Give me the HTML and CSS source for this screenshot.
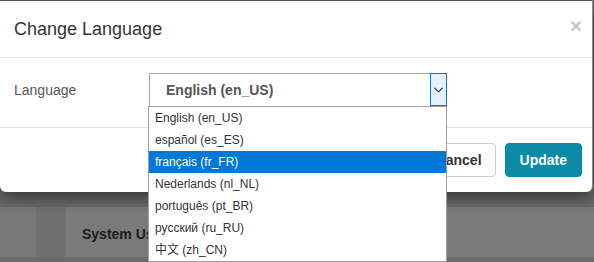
FILE: index.html
```html
<!DOCTYPE html>
<html lang="en">
<head>
<meta charset="utf-8">
<title>Change Language</title>
<link rel="stylesheet" href="styles.css">
</head>
<body>
<div class="page">
  <div class="page-top"></div>
  <div class="page-row">
    <div class="side-panel"></div>
    <div class="main-panel">
      <div class="panel-title">System Users</div>
    </div>
  </div>
</div>

<div class="modal">
  <div class="modal-header">
    <h4 class="modal-title">Change Language</h4>
    <span class="close">&times;</span>
  </div>
  <div class="modal-body">
    <label class="field-label">Language</label>
    <div class="select">
      <span class="select-value">English (en_US)</span>
      <span class="select-arrow">
        <svg width="9" height="6" viewBox="0 0 9 6"><polyline points="0.5,0.8 4.5,4.8 8.5,0.8" fill="none" stroke="#222" stroke-width="1.1"/></svg>
      </span>
      <ul class="dropdown">
        <li>English (en_US)</li>
        <li>español (es_ES)</li>
        <li class="active">français (fr_FR)</li>
        <li>Nederlands (nl_NL)</li>
        <li>português (pt_BR)</li>
        <li>русский (ru_RU)</li>
        <li>中文 (zh_CN)</li>
      </ul>
    </div>
  </div>
  <div class="modal-footer">
    <button class="btn btn-default">Cancel</button>
    <button class="btn btn-primary">Update</button>
  </div>
</div>
</body>
</html>
```

FILE: styles.css
```css
* { box-sizing: border-box; }

html, body {
  margin: 0;
  padding: 0;
}

body {
  width: 594px;
  height: 262px;
  overflow: hidden;
  background: #6b6b6b;
  font-family: "Liberation Sans", Arial, sans-serif;
  position: relative;
}

/* background page (dimmed by backdrop) */
.page-top {
  height: 207px;
  background: #686868;
}

.page-row {
  display: flex;
  gap: 30px;
  height: 50px;
  background: #707070;
}

.side-panel {
  width: 36px;
  background: #787878;
}

.main-panel {
  flex: 1;
  background: #7a7a7a;
  padding: 19px 16px 0 16px;
}

.panel-title {
  font-weight: bold;
  font-size: 14px;
  color: #1c1c1c;
}

/* modal */
.modal {
  position: absolute;
  top: 0;
  left: 0;
  width: 593px;
  background: #fff;
  border-top: 1px solid #5a5a5a;
  border-right: 1px solid #8a8a8a;
  border-radius: 0 0 6px 6px;
  box-shadow: 0 5px 15px rgba(0, 0, 0, 0.5);
}

.modal-header {
  display: flex;
  justify-content: space-between;
  align-items: flex-start;
  height: 57px;
  padding: 17px 10px 0 14px;
  border-bottom: 1px solid #e5e5e5;
}

.modal-title {
  margin: 0;
  font-size: 18px;
  font-weight: normal;
  line-height: 22px;
  color: #333;
}

.close {
  font-size: 21px;
  font-weight: bold;
  line-height: 21px;
  color: #c6c6c6;
  margin-top: -3px;
}

.modal-body {
  display: flex;
  align-items: flex-start;
  padding: 15px 14px 20px 14px;
}

.field-label {
  width: 135px;
  font-size: 14px;
  line-height: 34px;
  color: #555;
}

.select {
  position: relative;
  display: flex;
  align-items: stretch;
  width: 298px;
  height: 34px;
  border: 1px solid #a6a6a6;
  border-right: none;
}

.select-value {
  flex: 1;
  padding-left: 16px;
  font-size: 14px;
  font-weight: bold;
  line-height: 32px;
  color: #555;
}

.select-arrow {
  width: 17px;
  margin-top: -1px;
  height: 33px;
  border: 1px solid #0078d7;
  background: #e5f1fb;
  display: flex;
  align-items: center;
  justify-content: center;
  padding-top: 1px;
}

.dropdown {
  position: absolute;
  top: 32px;
  left: -2px;
  width: 299px;
  margin: 0;
  padding: 0;
  list-style: none;
  background: #fff;
  border: 1px solid #a0a0a0;
  z-index: 2;
}

.dropdown li {
  height: 22px;
  line-height: 22px;
  padding-left: 6px;
  font-size: 12px;
  color: #333;
  font-family: "Liberation Sans", "Noto Sans CJK SC", sans-serif;
}

.dropdown li.active {
  background: #0078d7;
  color: #fff;
}

.modal-footer {
  display: flex;
  justify-content: flex-end;
  gap: 9px;
  padding: 15px 10px 15px 15px;
  border-top: 1px solid #e5e5e5;
}

.btn {
  height: 34px;
  padding: 0 13px;
  font-family: "Liberation Sans", Arial, sans-serif;
  font-size: 14px;
  font-weight: bold;
  border-radius: 4px;
  border: 1px solid transparent;
}

.btn-default {
  background: #fff;
  color: #333;
  border-color: #ccc;
}

.btn-primary {
  background: #0b8ba7;
  color: #fff;
  border-color: #0a88a3;
  padding: 0 14px;
}
```
